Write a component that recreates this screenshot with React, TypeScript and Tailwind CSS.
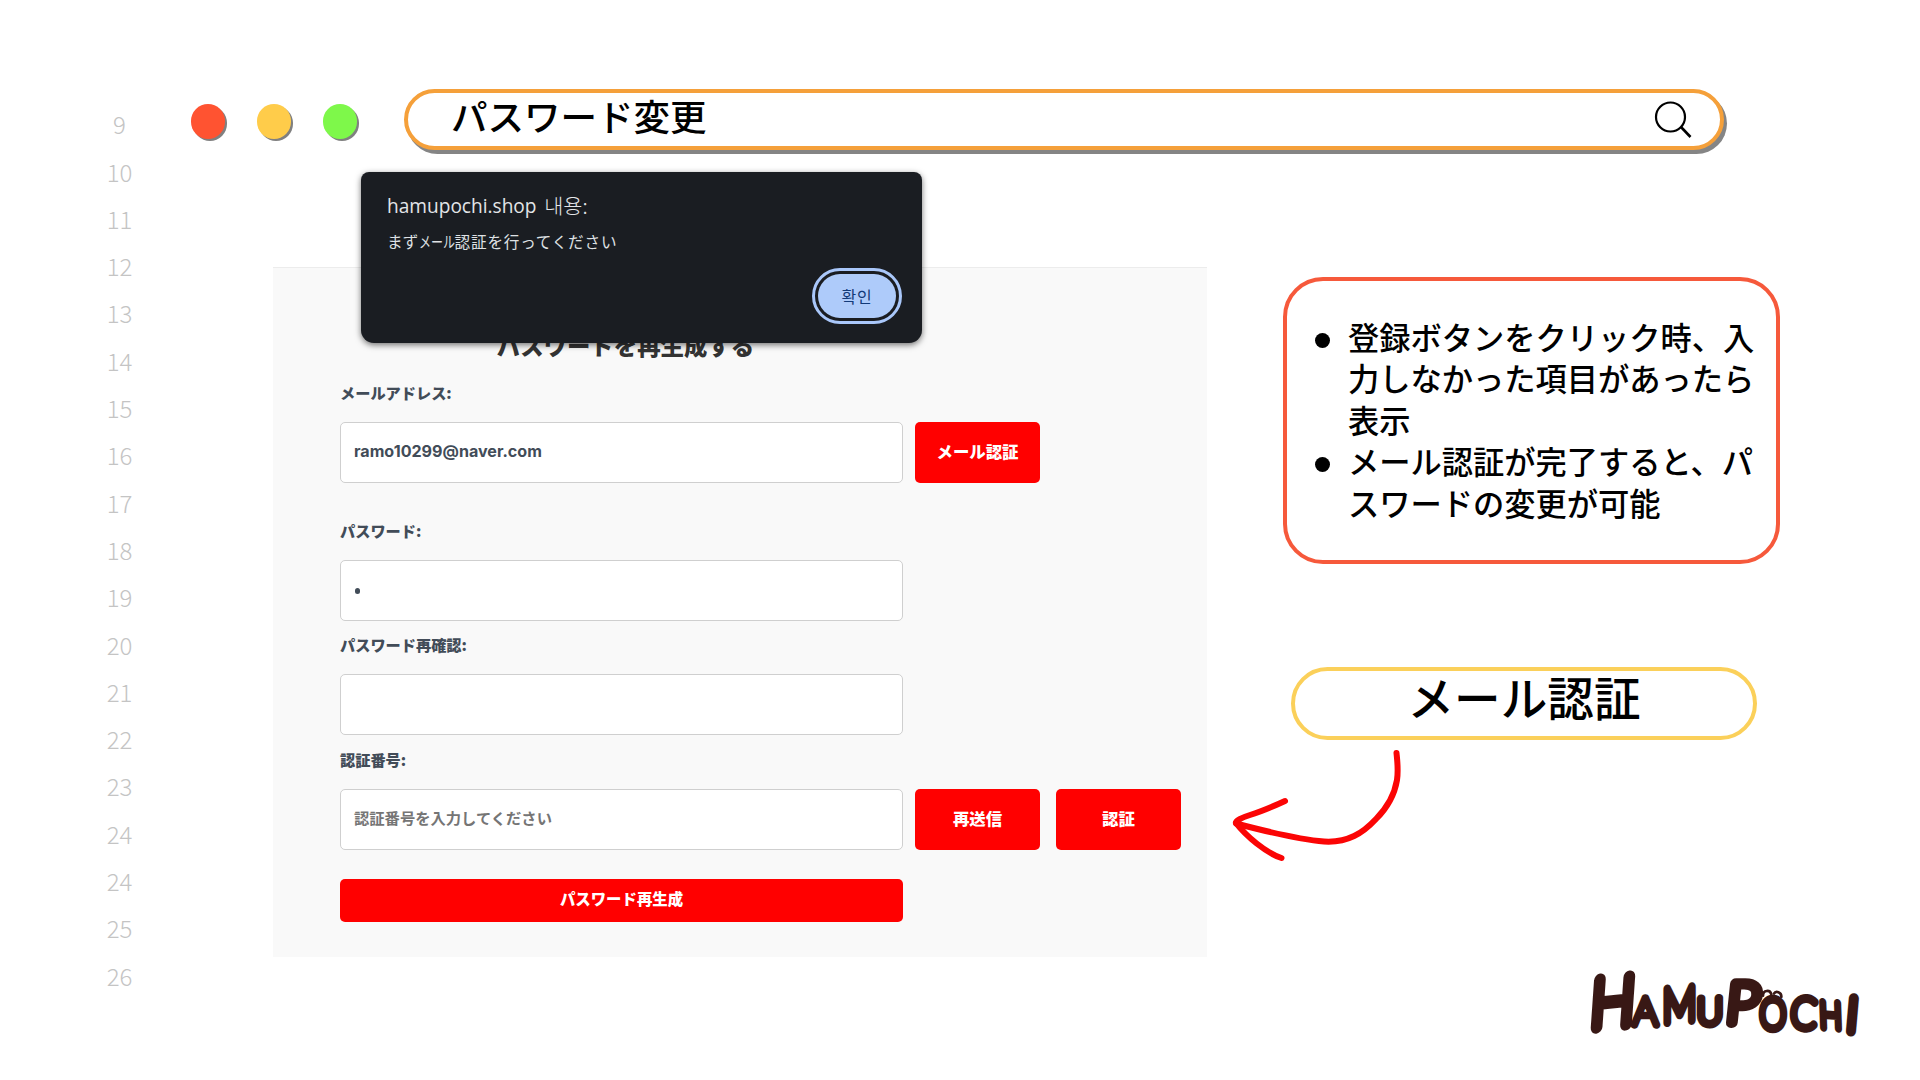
import type { ReactNode } from "react";

const lineNumbers = [9, 10, 11, 12, 13, 14, 15, 16, 17, 18, 19, 20, 21, 22, 23, 24, 24, 25, 26];

const jp = "font-['Noto_Sans_CJK_JP',sans-serif]";

function WindowDot({ color }: { color: string }) {
  return <span className={`h-[35px] w-[34px] rounded-full shadow-[2px_2px_0_0_#808080] ${color}`} />;
}

function Field({ label, className = "", children }: { label: string; className?: string; children?: ReactNode }) {
  return (
    <div className={className}>
      <div className="h-6 text-[15.2px] leading-[21px] font-black whitespace-nowrap text-[#424c58]">{label}</div>
      <div className="mt-4 flex">{children}</div>
    </div>
  );
}

function Input({ children }: { children?: ReactNode }) {
  return (
    <div className="flex h-[61px] w-[563px] items-center rounded-[5px] border border-[#cfcfcf] bg-white pl-[13px]">
      {children}
    </div>
  );
}

function RedButton({ children, className = "" }: { children: ReactNode; className?: string }) {
  return (
    <button className={`h-[61px] w-[125px] rounded-[5px] bg-[#ff0000] pb-[2px] text-[16.4px] font-black text-white ${className}`}>
      {children}
    </button>
  );
}

function AlertDialog() {
  return (
    <div className="absolute top-[172px] left-[361px] h-[171px] w-[561px] rounded-t-[8px] rounded-b-[13px] bg-[#1a1d22] pt-[20px] pl-[26px] font-['Open_Sans','Noto_Sans_CJK_KR',sans-serif] shadow-[0_2px_6px_rgba(0,0,0,0.55)]">
      <p className="flex h-7 items-center text-[19.1px] whitespace-pre text-[#e3e5e8]">
        hamupochi.shop<span className="ml-[3px] font-['Noto_Sans_CJK_KR',sans-serif] text-[20.8px] font-light">{" 내용:"}</span>
      </p>
      <p className="mt-[10px] flex h-6 items-center font-['Noto_Sans_CJK_JP',sans-serif] text-[15.6px] whitespace-nowrap text-[#dfe1e4]">
        <span className="tracking-[0.2px]">まず</span>
        <span className="inline-block w-[36px]">
          <span className="inline-block origin-left scale-x-[0.77]">メール</span>
        </span>
        <span className="tracking-[0.8px]">認証を行ってください</span>
      </p>
      <button className="absolute top-[96px] left-[451px] flex h-[56px] w-[90px] items-center justify-center rounded-full border-[3px] border-[#a9c7fa] p-[3px]">
        <span className="flex h-full w-full items-center justify-center rounded-full bg-[#aecbfa] pb-px font-['Noto_Sans_CJK_KR',sans-serif] text-[16px] tracking-[0.8px] text-[#123a78]">
          확인
        </span>
      </button>
    </div>
  );
}

const logoLetters = [
  { ch: "H", x: 154, y: 227, size: 200, sx: 0.88, rot: -6, skew: -10, w: 38 },
  { ch: "A", x: 256, y: 226, size: 114, sx: 1, rot: 0, skew: 0, w: 22 },
  { ch: "M", x: 359, y: 214, size: 142, sx: 0.8, rot: -5, skew: -5, w: 28 },
  { ch: "U", x: 450, y: 222, size: 110, sx: 0.98, rot: -2, skew: -2, w: 25 },
  { ch: "P", x: 543, y: 218, size: 168, sx: 1.04, rot: 1, skew: -5, w: 32 },
  { ch: "O", x: 639, y: 237, size: 126, sx: 0.8, rot: 0, skew: 0, w: 26 },
  { ch: "C", x: 728, y: 234, size: 126, sx: 0.88, rot: 4, skew: 0, w: 26 },
  { ch: "H", x: 813, y: 234, size: 108, sx: 0.82, rot: 4, skew: 6, w: 25 },
  { ch: "I", x: 873, y: 243, size: 138, sx: 0.85, rot: 5, skew: 0, w: 34 },
];

function Logo() {
  return (
    <svg className="h-[110px] w-[320px]" viewBox="0 0 960 330" aria-label="HamuPochi">
      {logoLetters.map((l, i) => (
        <text
          key={i}
          transform={`translate(${l.x} ${l.y}) rotate(${l.rot}) skewX(${l.skew}) scale(${l.sx} 1)`}
          textAnchor="middle"
          fontFamily="Lato"
          fontWeight="100"
          fontSize={l.size}
          fill="#381815"
          stroke="#381815"
          strokeWidth={l.w}
          strokeLinejoin="round"
        >
          {l.ch}
        </text>
      ))}
      <g fill="none" stroke="#381815" strokeWidth="8" strokeLinecap="round">
        <path d="M609 137c0-17 21-19 25-4" />
        <path d="M642 131c5-10 23-5 22 10" />
      </g>
    </svg>
  );
}

function Arrow() {
  return (
    <svg className="mt-[6px] ml-[-63px] h-[120px] w-[180px]" viewBox="1228 746 180 120" fill="none" stroke="#fb0505" strokeWidth="6" strokeLinecap="round" strokeLinejoin="round">
      <path d="M1396.500 753c1 10 2 17 .5 27c-3 18-12 30-21 39c-13 14-28 24-52 22.500c-25-2-54-9-88-18c-1-3 6-6 14-8.500c13-4 22-8 35-14" />
      <path d="M1236 823c10 13 30 30 45.500 35" />
    </svg>
  );
}

function Note({ lines }: { lines: string[] }) {
  return (
    <li className="flex">
      <span className="mt-[17px] mr-[18px] h-[15px] w-[15px] rounded-full bg-black" />
      <div>
        {lines.map((line) => (
          <div key={line} className="h-[41.5px] leading-[41.5px] whitespace-nowrap">
            {line}
          </div>
        ))}
      </div>
    </li>
  );
}

export default function App() {
  return (
    <div className={`relative flex h-[1080px] w-[1920px] overflow-hidden bg-white ${jp}`}>
      <div className="w-[191px] pt-[100.300px] pl-[47px] text-center text-[24px] font-light text-[#c4c4c4]">
        {lineNumbers.map((n, i) => (
          <div key={i} className="h-[47.3px] w-[145px] leading-[47.3px]">
            {n}
          </div>
        ))}
      </div>

      <div className="flex flex-1 flex-col pt-[89px]">
        <header className="flex h-[61px]">
          <div className="flex w-[213px] gap-[32px] pt-[15px]">
            <WindowDot color="bg-[#ff5331]" />
            <WindowDot color="bg-[#ffcc4a]" />
            <WindowDot color="bg-[#7ef84a]" />
          </div>
          <div className="flex w-[1320px] items-center justify-between rounded-full border-4 border-[#f5a03a] bg-white pr-[27px] pl-[43px] shadow-[3px_4px_0_0_#858585]">
            <h1 className="pb-[7px] text-[36.500px] leading-none font-medium text-black">パスワード変更</h1>
            <svg className="h-[40px] w-[40px]" viewBox="0 0 40 40" fill="none" stroke="#000" strokeWidth="2.200">
              <circle cx="17.500" cy="17" r="14.500" />
              <path d="M28 27l9.500 10" strokeWidth="2.600" />
            </svg>
          </div>
        </header>

        <div className="mt-[117px] flex">
          <section className="ml-[82px] h-[690px] w-[934px] border-t border-[#ececec] bg-[#f9f9f9] pt-[60px] pl-[67px]">
            <h2 className="h-9 w-[571px] text-center text-[23.400px] leading-[35px] font-black text-[#333]">
              パスワードを再生成する
            </h2>
            <Field label="メールアドレス:" className="mt-[17.500px]">
              <Input>
                <span className="pb-px font-['Inter',sans-serif] text-[16.100px] font-bold text-[#424c58]">ramo10299@naver.com</span>
              </Input>
              <RedButton className="ml-[12px]">メール認証</RedButton>
            </Field>
            <Field label="パスワード:" className="mt-[37.500px]">
              <Input>
                <span className="ml-px h-[6px] w-[5px] rounded-full bg-[#424c58]" />
              </Input>
            </Field>
            <Field label="パスワード再確認:" className="mt-[13px]">
              <Input />
            </Field>
            <Field label="認証番号:" className="mt-[13.500px]">
              <Input>
                <span className="pb-[3px] text-[15.300px] font-bold text-[#757575]">認証番号を入力してください</span>
              </Input>
              <RedButton className="ml-[12px]">再送信</RedButton>
              <RedButton className="ml-[16px]">認証</RedButton>
            </Field>
            <button className="mt-[29px] flex h-[43px] w-[563px] items-center justify-center rounded-[5px] bg-[#ff0000] pb-[3px] text-[15.400px] font-black text-white">
              パスワード再生成
            </button>
          </section>

          <aside className="ml-[76px] flex flex-col pt-[10px]">
            <ul className="h-[287px] w-[497px] rounded-[40px] border-4 border-[#f6593b] pt-[34.500px] pl-[28px] text-[31.250px] font-medium text-black">
              <Note lines={["登録ボタンをクリック時、入", "力しなかった項目があったら", "表示"]} />
              <Note lines={["メール認証が完了すると、パ", "スワードの変更が可能"]} />
            </ul>
            <div className="mt-[103px] ml-[8px] h-[73px] w-[466px] rounded-full border-4 border-[#fbd05a] text-center text-[46.600px] leading-[50px] font-medium text-black">
              メール認証
            </div>
            <div className="ml-[8px]">
              <Arrow />
            </div>
            <div className="mt-[84px] ml-[277px]">
              <Logo />
            </div>
          </aside>
        </div>
      </div>

      <AlertDialog />
    </div>
  );
}
